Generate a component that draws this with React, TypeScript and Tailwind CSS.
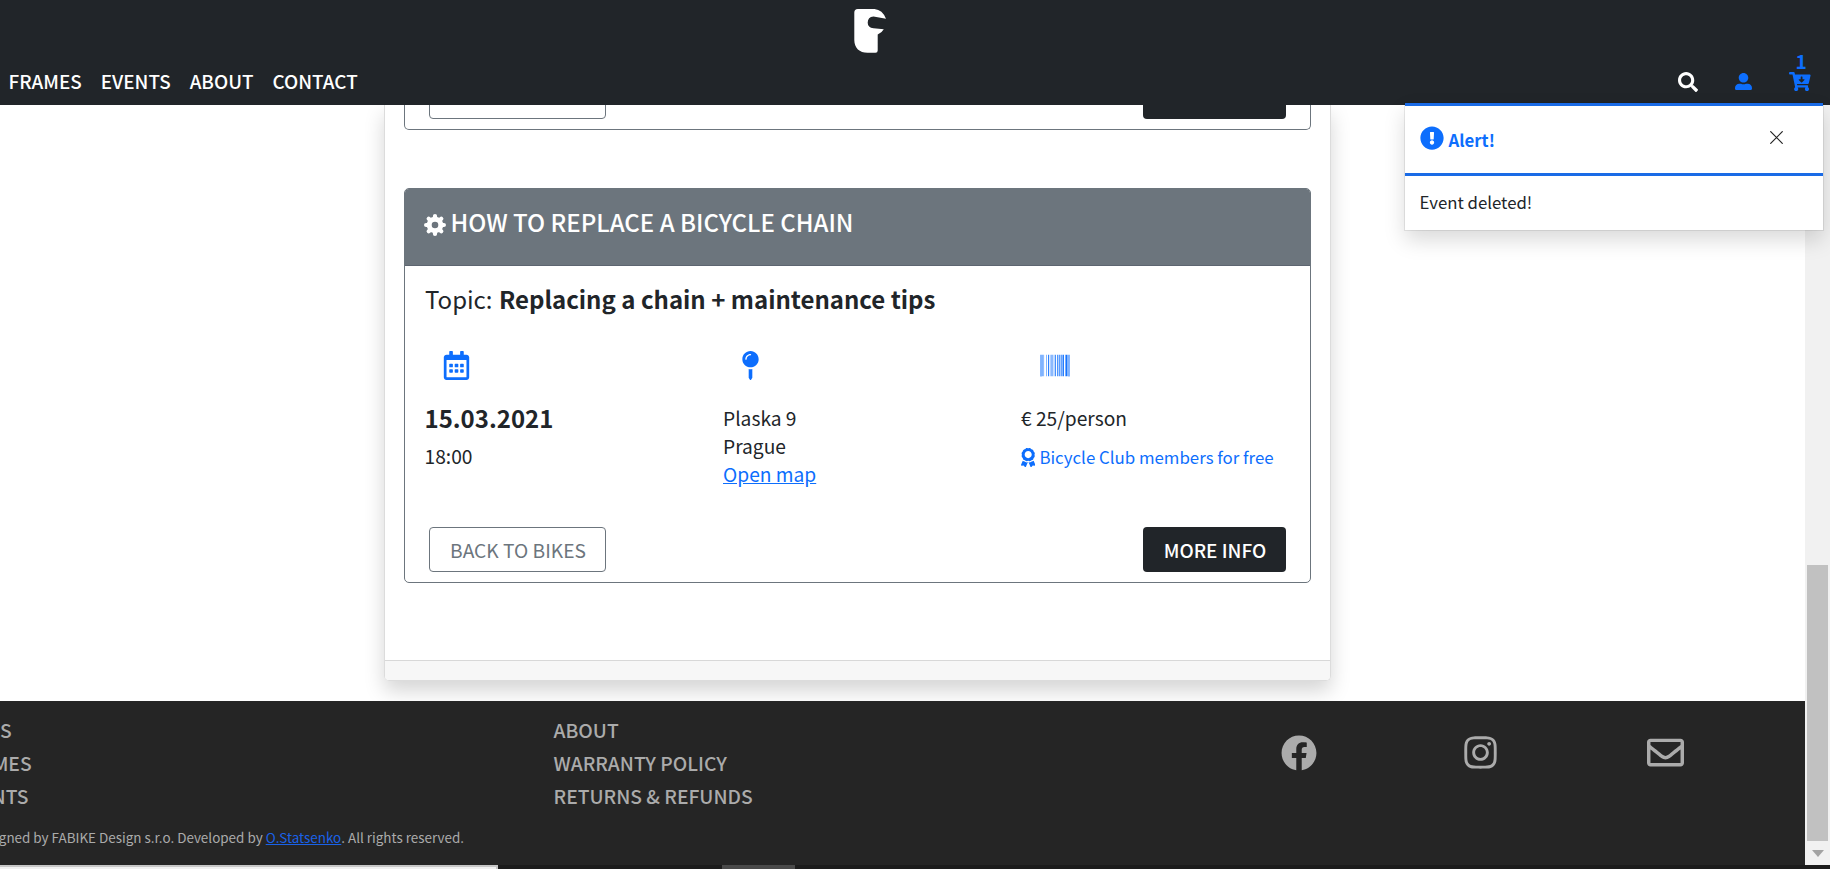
import React from "react";
import {
  FaAward, FaBarcode, FaCartArrowDown, FaExclamationCircle, FaFacebook,
  FaInstagram, FaMapPin, FaRegCalendarAlt, FaRegEnvelope, FaSearch, FaUserAlt,
} from "react-icons/fa";

function Logo() {
  return (
    <svg width="34" height="46" viewBox="0 0 34 46" className="ml-[853px] mt-2 block" fill="#fff">
      <path d="M1.3 4.5Q1.3 1 4.8 1H21.500Q29.500 1.800 33 10.8L20.500 8.500Q14.700 9 14.700 14.700Q14.700 19.500 20.500 20.300L30.800 21.200Q29.500 24 24.700 26.400V42.500Q24.700 44.800 22.500 44.800H14.500C6.500 44.800 1.300 40 1.300 32Z" />
    </svg>
  );
}

function GearIcon({ className }: { className?: string }) {
  return (
    <svg viewBox="-11 -11 22 22" className={className} fill="none" stroke="currentColor">
      <circle r="5.800" strokeWidth="5" />
      <path
        strokeWidth="4.200"
        strokeLinecap="round"
        d="M0-7.500V-8.900M0 7.500V8.900M-7.500 0H-8.900M7.500 0H8.900M5.400 5.400L6.300 6.300M-5.400 5.400L-6.300 6.300M5.400-5.400L6.300-6.300M-5.400-5.400L-6.300-6.300"
      />
    </svg>
  );
}

function Header() {
  return (
    <header className="h-[105px] shrink-0 bg-[#212529] text-white">
      <Logo />
      <div className="flex h-[51px] items-start">
        <nav className="flex gap-[19px] pl-[8.600px] pt-[12.500px] text-[18.880px] font-medium leading-7">
          <a>FRAMES</a>
          <a>EVENTS</a>
          <a>ABOUT</a>
          <a>CONTACT</a>
        </nav>
        <div className="ml-auto flex items-start pr-[19px]">
          <FaSearch className="mt-[18px] size-5" />
          <FaUserAlt className="ml-[37px] mt-[19px] size-[17px] text-[#0d6efd]" />
          <div className="-mt-[7px] ml-[37px] flex flex-col items-center text-[#0d6efd]">
            <span className="h-[25px] pl-[2px] text-[19.200px] font-bold leading-[28px]">1</span>
            <FaCartArrowDown className="h-[19.200px] w-[21.600px]" />
          </div>
        </div>
      </div>
    </header>
  );
}

function CardActions({ backLabel, infoLabel }: { backLabel?: string; infoLabel?: string }) {
  return (
    <div className="flex justify-between pl-6 pr-6">
      <button className="h-[45px] w-[177px] rounded border border-[#6c757d] pl-px pt-px text-[19.200px] text-[#6c757d]">{backLabel}</button>
      <button className="h-[45px] w-[143px] rounded bg-[#212529] pl-px pt-px text-[18.950px] font-medium text-white">{infoLabel}</button>
    </div>
  );
}

function EventCard() {
  return (
    <article className="mt-[58px] h-[395px] overflow-hidden rounded-[5px] border border-[#6c757d]">
      <div className="-mt-px flex h-[78px] items-start border-b border-[#5d6570] bg-[#6c757d] pl-[19px] pt-[16px] text-white">
        <GearIcon className="mt-[9.500px] size-[22px]" />
        <h2 className="ml-[4.500px] text-2xl font-medium leading-9">HOW TO REPLACE A BICYCLE CHAIN</h2>
      </div>
      <p className="mt-[14.500px] pl-[20px] text-2xl leading-9">
        Topic: <b className="ml-px">Replacing a chain + maintenance tips</b>
      </p>
      <div className="mt-[34px] grid h-[176.500px] grid-cols-[298px_298px_1fr] pl-[20px] text-[19.200px] leading-7">
        <div>
          <FaRegCalendarAlt className="ml-[16.500px] h-[29px] w-[29px] text-[#0d6efd]" />
          <div className="-ml-[0.500px] mt-[20.500px] text-2xl font-bold leading-9">15.03.2021</div>
          <div className="-ml-[0.500px] mt-[6px]">18:00</div>
        </div>
        <div>
          <FaMapPin className="ml-[12.500px] h-[29px] w-[29px] text-[#0d6efd]" />
          <div className="mt-[24.500px]">Plaska 9</div>
          <div>Prague</div>
          <a className="text-[#0d6efd] underline">Open map</a>
        </div>
        <div>
          <FaBarcode className="ml-[19px] h-[29px] w-[30px] text-[#0d6efd]" />
          <div className="mt-[24.500px]">€ 25/person</div>
          <div className="mt-[11px] flex text-[16.850px] text-[#0d6efd]">
            <FaAward className="mt-[4.500px] h-[19.200px] w-[14.400px]" />
            <span className="ml-[4px]">Bicycle Club members for free</span>
          </div>
        </div>
      </div>
      <CardActions backLabel="BACK TO BIKES" infoLabel="MORE INFO" />
    </article>
  );
}

function Main() {
  return (
    <main className="h-[596px] shrink-0 overflow-hidden bg-white">
      <section className="ml-[384px] h-[576px] w-[947px] rounded-b-[5px] border border-t-0 border-[#dcdcdc] shadow-[0_10px_20px_rgba(0,0,0,0.17)]">
        <div className="h-[555px] px-[19px]">
          <div className="h-[25px] overflow-hidden rounded-b-[5px] border border-t-0 border-[#6c757d]">
            <div className="-mt-[31px]">
              <CardActions />
            </div>
          </div>
          <EventCard />
        </div>
        <div className="h-[20px] rounded-b border-t border-[#d8d8d8] bg-[#f7f7f7]" />
      </section>
    </main>
  );
}

function Footer() {
  return (
    <footer className="h-[164px] shrink-0 overflow-hidden bg-[#252525] pt-[13px] text-[#ababab]">
      <div className="flex items-start text-[19.250px] font-medium leading-[33px]">
        <ul className="-ml-[43px] w-[596.500px]">
          <li>BIKES</li>
          <li>FRAMES</li>
          <li>EVENTS</li>
        </ul>
        <ul>
          <li>ABOUT</li>
          <li>WARRANTY POLICY</li>
          <li>RETURNS &amp; REFUNDS</li>
        </ul>
        <div className="ml-auto flex items-center pr-[121px] pt-[20px]">
          <FaFacebook className="size-[36px]" />
          <FaInstagram className="ml-[145px] size-[37px]" />
          <FaRegEnvelope className="ml-[148px] size-[37px]" />
        </div>
      </div>
      <p className="mt-[14px] flex w-[464px] justify-end whitespace-pre text-[13.450px] leading-5">
        Designed by FABIKE Design s.r.o. Developed by <a className="text-[#1a62e8] underline">O.Statsenko</a>. All rights reserved.
      </p>
    </footer>
  );
}

function ScrollBar() {
  return (
    <div className="flex w-[25px] shrink-0 flex-col items-center bg-[#f1f1f1]">
      <div className="mt-[460px] h-[276px] w-[21px] bg-[#c1c1c1]" />
      <svg width="12" height="7" viewBox="0 0 12 7" className="mt-[9px]" fill="#a3a3a3">
        <path d="M0 0h12L6 7z" />
      </svg>
    </div>
  );
}

function Toast() {
  return (
    <div className="absolute left-[1405px] top-[103px] h-[127px] w-[418px] bg-white text-[16.800px] leading-6 text-[#212529] shadow-[0_0_0_1px_rgba(0,0,0,0.08),0_10px_20px_rgba(0,0,0,0.15)]">
      <div className="flex h-[73px] items-start border-y-[3px] border-[#1a6be6] pl-[15px] pr-[40px]">
        <FaExclamationCircle className="mt-[19.500px] size-[24px] text-[#0d6efd]" />
        <b className="ml-[4.500px] mt-[22px] text-[#0d6efd]">Alert!</b>
        <svg width="13" height="13" viewBox="0 0 13 13" className="ml-auto mt-[25px]" stroke="#222" strokeWidth="1.200" strokeLinecap="round">
          <path d="M.7.7l11.600 11.600M12.300.7L.7 12.300" />
        </svg>
      </div>
      <p className="pl-[14.500px] pt-[13.500px]">Event deleted!</p>
    </div>
  );
}

export default function App() {
  return (
    <div className="relative flex h-[869px] w-[1830px] flex-col overflow-hidden bg-[#1c1c1c] font-['Noto_Sans_CJK_JP',sans-serif] text-[#212529]">
      <Header />
      <div className="flex h-[760px]">
        <div className="flex w-[1805px] flex-col">
          <Main />
          <Footer />
        </div>
        <ScrollBar />
      </div>
      <div className="flex h-1">
        <div className="w-[498px] border-r-2 border-t-2 border-[#c6c6c6] bg-[#f0f0f0]" />
        <div className="ml-[224px] w-[73px] bg-[#4a4a4a]" />
      </div>
      <Toast />
    </div>
  );
}
